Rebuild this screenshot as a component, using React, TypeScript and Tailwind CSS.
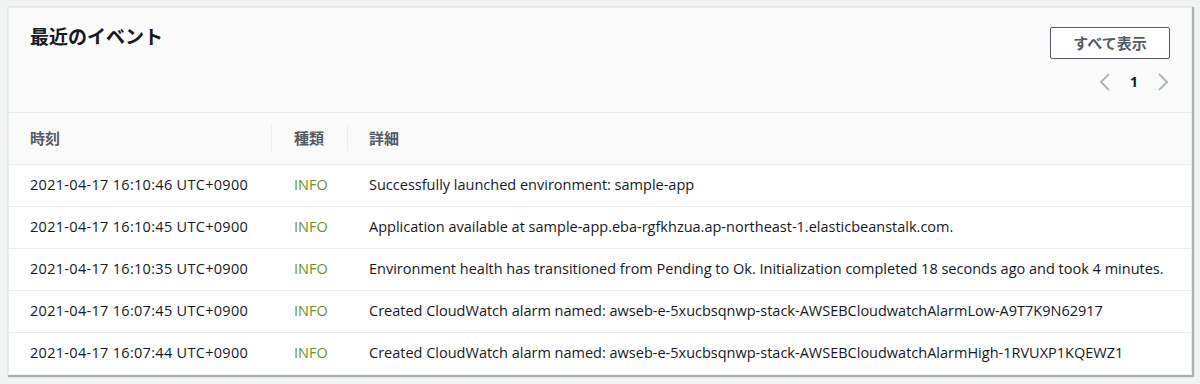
import React from "react";

const events = [
  {
    time: "2021-04-17 16:10:46 UTC+0900",
    detail: "Successfully launched environment: sample-app",
  },
  {
    time: "2021-04-17 16:10:45 UTC+0900",
    detail:
      "Application available at sample-app.eba-rgfkhzua.ap-northeast-1.elasticbeanstalk.com.",
  },
  {
    time: "2021-04-17 16:10:35 UTC+0900",
    detail:
      "Environment health has transitioned from Pending to Ok. Initialization completed 18 seconds ago and took 4 minutes.",
  },
  {
    time: "2021-04-17 16:07:45 UTC+0900",
    detail:
      "Created CloudWatch alarm named: awseb-e-5xucbsqnwp-stack-AWSEBCloudwatchAlarmLow-A9T7K9N62917",
  },
  {
    time: "2021-04-17 16:07:44 UTC+0900",
    detail:
      "Created CloudWatch alarm named: awseb-e-5xucbsqnwp-stack-AWSEBCloudwatchAlarmHigh-1RVUXP1KQEWZ1",
  },
];

function Chevron({ dir }: { dir: "left" | "right" }) {
  return (
    <svg width="12" height="18" viewBox="0 0 12 18" fill="none">
      <path
        d={dir === "left" ? "M10 1 L2 9 L10 17" : "M2 1 L10 9 L2 17"}
        stroke="#aab7b8"
        strokeWidth="2"
      />
    </svg>
  );
}

export default function App() {
  return (
    <div
      className="h-[384px] w-[1200px] bg-[#f2f3f3] pl-[8px] pt-[7px]"
      style={{ fontFamily: '"Open Sans", "Noto Sans CJK JP", sans-serif' }}
    >
      <div className="w-[1184px] overflow-hidden border border-[#eaeded] bg-white shadow-[1px_1px_1px_1px_rgba(0,28,36,0.3)]">
        {/* Header */}
        <div className="flex h-[105px] items-start justify-between border-b border-[#eaeded] bg-[#fafafa] pl-[21px] pr-[21px] pt-[18px]">
          <h2 className="text-[19px] font-bold leading-[22px] text-[#16191f]">
            最近のイベント
          </h2>
          <div className="flex flex-col items-end pt-[1px]">
            <button className="h-[32px] w-[120px] rounded-[2px] border border-[#545b64] bg-white text-[15px] font-bold text-[#545b64]">
              すべて表示
            </button>
            <div className="mt-[12px] flex items-center gap-[19px] pr-[1px] text-[14px] font-bold text-[#16191f]">
              <Chevron dir="left" />
              <span>1</span>
              <Chevron dir="right" />
            </div>
          </div>
        </div>

        {/* Table */}
        <table className="w-full border-collapse text-[14.5px]">
          <thead>
            <tr className="h-[51px] bg-[#fafafa] text-left text-[15px] font-bold text-[#545b64]">
              <th className="w-[263px] pl-[21px] font-bold">
                <div className="flex items-center justify-between">
                  <span>時刻</span>
                  <span className="h-[26px] w-px bg-[#eaeded]" />
                </div>
              </th>
              <th className="w-[76px] font-bold">
                <div className="flex items-center justify-between">
                  <span className="pl-[22px]">種類</span>
                  <span className="h-[26px] w-px bg-[#eaeded]" />
                </div>
              </th>
              <th className="pl-[21px] font-bold">詳細</th>
            </tr>
          </thead>
          <tbody className="text-[#16191f]">
            {events.map((e) => (
              <tr key={e.time} className="h-[42px] border-t border-[#eaeded]">
                <td className="pl-[21px] whitespace-nowrap tracking-[0.3px]">{e.time}</td>
                <td className="pl-[22px] text-[#6f911e]">INFO</td>
                <td className="pl-[21px] whitespace-nowrap">{e.detail}</td>
              </tr>
            ))}
          </tbody>
        </table>
      </div>
    </div>
  );
}
